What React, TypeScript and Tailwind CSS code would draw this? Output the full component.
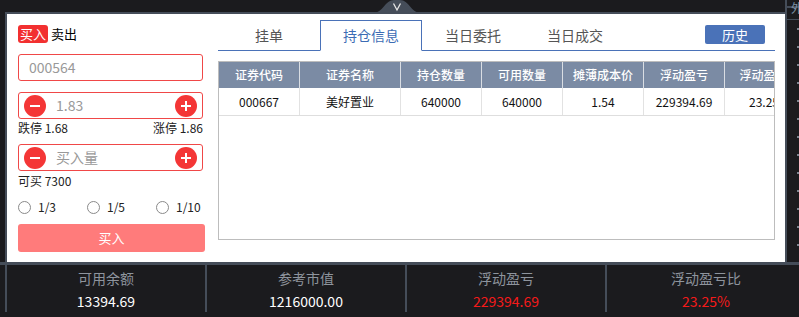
import React from 'react';

const headers = ['证券代码', '证券名称', '持仓数量', '可用数量', '摊薄成本价', '浮动盈亏', '浮动盈亏比'];
const widths = ['w-[81px]', 'w-[101px]', 'w-[81px]', 'w-[81px]', 'w-[81px]', 'w-[81px]', 'w-[90px]'];
const row = ['000667', '美好置业', '640000', '640000', '1.54', '229394.69', '23.25%'];

const tabs = ['挂单', '持仓信息', '当日委托', '当日成交'];

const stats = [
  { label: '可用余额', value: '13394.69', red: false },
  { label: '参考市值', value: '1216000.00', red: false },
  { label: '浮动盈亏', value: '229394.69', red: true },
  { label: '浮动盈亏比', value: '23.25%', red: true },
];

const RoundBtn = ({ plus }: { plus?: boolean }) => (
  <div className="w-[22px] h-[22px] rounded-full bg-[#f43636] relative shrink-0">
    <div className="absolute left-[6px] top-[10px] w-[10px] h-[2px] bg-white" />
    {plus && <div className="absolute left-[10px] top-[6px] w-[2px] h-[10px] bg-white" />}
  </div>
);

const Radio = ({ label, className }: { label: string; className: string }) => (
  <div className={`flex items-center ${className}`}>
    <div className="w-[13px] h-[13px] rounded-full border border-[#8a8a8a] bg-white" />
    <span className="ml-[7px]">{label}</span>
  </div>
);

const App = () => {
  return (
    <div className="w-[799px] h-[317px] bg-[#1b1b1e] overflow-hidden flex flex-col font-['Noto_Sans_CJK_SC',sans-serif]">
      <div className="flex h-[262px]">
        <div className="w-[785px] flex flex-col">
          <div className="h-[12px] relative">
            <svg className="absolute left-[373px] top-0" width="48" height="13" viewBox="0 0 48 13">
              <path d="M0 13 C 10 13, 12 0, 21 0 L 27 0 C 36 0, 38 13, 48 13 Z" fill="#454d59" />
              <path d="M20.5 3.5 L24 10 L27.5 3.5" stroke="#e6e6e6" strokeWidth="1.3" fill="none" />
            </svg>
          </div>
          <div className="flex-1 ml-[5px] bg-white border-l-2 border-t-2 border-[#454d59] flex">
            {/* left order form */}
            <div className="w-[198px] pl-[11px] pt-[11px] flex flex-col text-[12px] text-[#222]">
              <div className="flex items-center h-[18px]">
                <span className="h-[18px] px-[2px] rounded-[3px] bg-[#f23030] text-white text-[13px] leading-[18px]">买入</span>
                <span className="ml-[3px] text-[13px] text-black">卖出</span>
              </div>
              <div className="mt-[11px] w-[185px] h-[27px] border border-[#f04848] rounded-[3px] flex items-center pl-[10px] text-[14px] text-[#999]">
                000564
              </div>
              <div className="mt-[11px] w-[185px] h-[27px] border border-[#f04848] rounded-[3px] flex items-center px-[5px] text-[14px] text-[#999]">
                <RoundBtn />
                <span className="ml-[10px] flex-1">1.83</span>
                <RoundBtn plus />
              </div>
              <div className="w-[187px] h-[18px] flex items-center justify-between pr-[2px]">
                <span>跌停 1.68</span>
                <span>涨停 1.86</span>
              </div>
              <div className="mt-[7px] w-[185px] h-[27px] border border-[#f04848] rounded-[3px] flex items-center px-[5px] text-[14px] text-[#999]">
                <RoundBtn />
                <span className="ml-[10px] flex-1">买入量</span>
                <RoundBtn plus />
              </div>
              <div className="h-[20px] flex items-center">可买 7300</div>
              <div className="mt-[6px] h-[20px] flex items-center">
                <Radio label="1/3" className="w-[69px]" />
                <Radio label="1/5" className="w-[69px]" />
                <Radio label="1/10" className="" />
              </div>
              <div className="mt-[7px] w-[187px] h-[28px] rounded-[3px] bg-[#ff7b7b] text-white text-[13px] flex items-center justify-center">
                买入
              </div>
            </div>

            {/* right tabs & table */}
            <div className="ml-[13px] w-[557px] pt-[6px] flex flex-col">
              <div className="flex items-start border-b border-[#4a72b8] h-[31px]">
                {tabs.map((t, i) =>
                  i === 1 ? (
                    <div
                      key={t}
                      className="w-[102px] h-[31px] border border-[#4a72b8] border-b-white bg-white flex items-center justify-center text-[14px] text-[#3c6cb4]"
                    >
                      {t}
                    </div>
                  ) : (
                    <div key={t} className="w-[102px] h-[30px] flex items-center justify-center text-[14px] text-[#555]">
                      {t}
                    </div>
                  )
                )}
                <div className="ml-auto mr-[10px] mt-[5px] w-[60px] h-[19px] rounded-[2px] bg-[#4a72b8] text-white text-[13px] flex items-center justify-center">
                  历史
                </div>
              </div>
              <div className="mt-[10px] h-[179px] border border-[#bdbdbd] overflow-hidden">
                <div className="flex h-[26px] bg-[#7b8ba4] text-white text-[12px] font-medium">
                  {headers.map((h, i) => (
                    <div
                      key={h}
                      className={`${widths[i]} shrink-0 flex items-center justify-center border-r border-[#d9dde3] whitespace-nowrap`}
                    >
                      {h}
                    </div>
                  ))}
                </div>
                <div className="flex h-[28px] border-b border-[#dedede] text-[12px] text-[#111]">
                  {row.map((v, i) => (
                    <div
                      key={i}
                      className={`${widths[i]} shrink-0 flex items-center justify-center border-r border-[#e2e2e2] whitespace-nowrap`}
                    >
                      {v}
                    </div>
                  ))}
                </div>
              </div>
            </div>
          </div>
        </div>
        <div className="w-[14px] border-l-2 border-[#454d59] flex flex-col">
          <div className="h-[8px] border-b-2 border-[#454d59] overflow-visible" />
          <div className="h-[20px] border-b border-[#454d59] -mt-[8px] pl-[4px] text-[12px] leading-[16px] text-[#7f93a8] overflow-hidden whitespace-nowrap">
            外
          </div>
          <div className="flex flex-col gap-[16px] pt-[8px] items-end">
            {Array.from({ length: 13 }).map((_, i) => (
              <div key={i} className="w-[2px] h-[2px] bg-[#7d8590]" />
            ))}
          </div>
        </div>
      </div>
      <div className="h-[3px] bg-[#454d59]" />
      <div className="flex pl-[5px] h-[47px]">
        {stats.map((s) => (
          <div key={s.label} className="w-[200px] shrink-0 border-l-2 border-[#454d59] flex flex-col items-center text-[14px]">
            <div className="mt-[3px] h-[20px] leading-[20px] text-[#8e949d]">{s.label}</div>
            <div className={`mt-[3px] h-[20px] leading-[20px] ${s.red ? 'text-[#f51a1a]' : 'text-white'}`}>{s.value}</div>
          </div>
        ))}
      </div>
    </div>
  );
};

export default App;
